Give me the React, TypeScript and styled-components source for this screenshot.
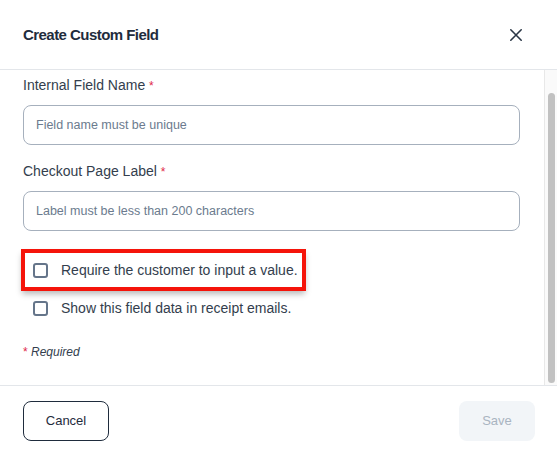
import React from "react";
import styled, { createGlobalStyle } from "styled-components";

const GlobalStyle = createGlobalStyle`
  html, body {
    margin: 0;
    padding: 0;
    background: #ffffff;
  }
  body {
    font-family: "Liberation Sans", Arial, Helvetica, sans-serif;
    color: #333e4d;
  }
  * {
    box-sizing: border-box;
  }
`;

function CloseIcon() {
  return (
    <svg width="14" height="14" viewBox="0 0 14 14" fill="none">
      <path
        d="M1.8 1.8L12.2 12.2M12.2 1.8L1.8 12.2"
        stroke="#2a3646"
        strokeWidth="1.6"
        strokeLinecap="round"
      />
    </svg>
  );
}

function Field({
  label,
  placeholder,
}: {
  label: string;
  placeholder: string;
}) {
  return (
    <FieldWrapper>
      <FieldLabel>
        {label} <Star>*</Star>
      </FieldLabel>
      <Input placeholder={placeholder} />
    </FieldWrapper>
  );
}

function CheckRow({
  text,
  highlighted,
}: {
  text: string;
  highlighted?: boolean;
}) {
  return (
    <Row highlighted={highlighted}>
      <Box />
      <RowText>{text}</RowText>
    </Row>
  );
}

export default function App() {
  return (
    <>
      <GlobalStyle />
      <Modal>
        <Header>
          <Title>Create Custom Field</Title>
          <CloseButton aria-label="Close">
            <CloseIcon />
          </CloseButton>
        </Header>
        <Body>
          <Content>
            <Field label="Internal Field Name" placeholder="Field name must be unique" />
            <Field
              label="Checkout Page Label"
              placeholder="Label must be less than 200 characters"
            />
            <Checks>
              <CheckRow text="Require the customer to input a value." highlighted />
              <CheckRow text="Show this field data in receipt emails." />
            </Checks>
            <RequiredNote>
              <Star>*</Star> Required
            </RequiredNote>
          </Content>
          <ScrollTrack>
            <ScrollThumb />
          </ScrollTrack>
        </Body>
        <Footer>
          <CancelButton>Cancel</CancelButton>
          <SaveButton disabled>Save</SaveButton>
        </Footer>
      </Modal>
    </>
  );
}

const Modal = styled.div`
  width: 557px;
  height: 455px;
  display: flex;
  flex-direction: column;
  background: #fff;
  overflow: hidden;
`;

const Header = styled.div`
  height: 70px;
  flex-shrink: 0;
  display: flex;
  align-items: center;
  justify-content: space-between;
  padding: 0 33px 0 23px;
  border-bottom: 1px solid #e3e6ea;
`;

const Title = styled.h2`
  margin: 0;
  font-size: 15px;
  font-weight: 700;
  color: #1f2c3d;
  letter-spacing: -0.55px;
`;

const CloseButton = styled.button`
  border: none;
  background: none;
  padding: 0;
  width: 16px;
  height: 16px;
  display: flex;
  align-items: center;
  justify-content: center;
  cursor: pointer;
`;

const Body = styled.div`
  flex: 1;
  display: flex;
  min-height: 0;
`;

const Content = styled.div`
  flex: 1;
  padding: 5px 24px 0 23px;
  display: flex;
  flex-direction: column;
`;

const FieldWrapper = styled.div`
  display: flex;
  flex-direction: column;
  gap: 9px;
  margin-bottom: 16px;
`;

const FieldLabel = styled.label`
  font-size: 14px;
  line-height: 20px;
  color: #333e4d;
`;

const Star = styled.span`
  color: #e0284a;
  font-size: 12px;
  font-style: normal;
`;

const Input = styled.input`
  height: 40px;
  width: 100%;
  border: 1px solid #a6b0bd;
  border-radius: 8px;
  padding: 0 12px;
  font-family: "Liberation Sans", Arial, sans-serif;
  font-size: 12.5px;
  color: #333e4d;
  outline: none;
  &::placeholder {
    color: #6b7b8e;
  }
`;

const Checks = styled.div`
  display: flex;
  flex-direction: column;
  gap: 4px;
  margin: 6px 0 0 2px;
  align-items: flex-start;
`;

const Row = styled.div<{ highlighted?: boolean }>`
  height: 34px;
  display: flex;
  align-items: center;
  gap: 13px;
  padding: 0 4px 0 8px;
  outline: ${({ highlighted }) => (highlighted ? "4px solid #f5140a" : "none")};
  box-shadow: ${({ highlighted }) =>
    highlighted ? "0 4px 6px 3px rgba(0, 0, 0, 0.28)" : "none"};
`;

const Box = styled.span`
  width: 15px;
  height: 15px;
  border: 2px solid #65758a;
  border-radius: 3px;
  flex-shrink: 0;
  background: #fff;
`;

const RowText = styled.span`
  font-size: 14px;
  color: #333e4d;
  white-space: nowrap;
`;

const RequiredNote = styled.div`
  margin-top: 19px;
  font-size: 12px;
  line-height: 16px;
  font-style: italic;
  color: #333e4d;
`;

const ScrollTrack = styled.div`
  width: 13px;
  flex-shrink: 0;
  background: #fafafa;
  border-left: 1px solid #e8e8e8;
  padding: 23px 2px 2px 3px;
  display: flex;
`;

const ScrollThumb = styled.div`
  flex: 1;
  background: #c1c1c1;
  border-radius: 4px;
`;

const Footer = styled.div`
  height: 70px;
  flex-shrink: 0;
  border-top: 1px solid #e3e6ea;
  display: flex;
  align-items: center;
  justify-content: space-between;
  padding: 0 22px 0 23px;
`;

const CancelButton = styled.button`
  width: 86px;
  height: 40px;
  border: 1px solid #1f2c3d;
  border-radius: 8px;
  background: #fff;
  font-family: "Liberation Sans", Arial, sans-serif;
  font-size: 13px;
  color: #1f2c3d;
  cursor: pointer;
`;

const SaveButton = styled.button`
  width: 76px;
  height: 40px;
  border: none;
  border-radius: 8px;
  background: #f2f5f8;
  font-family: "Liberation Sans", Arial, sans-serif;
  font-size: 13px;
  color: #a9b4c1;
`;
